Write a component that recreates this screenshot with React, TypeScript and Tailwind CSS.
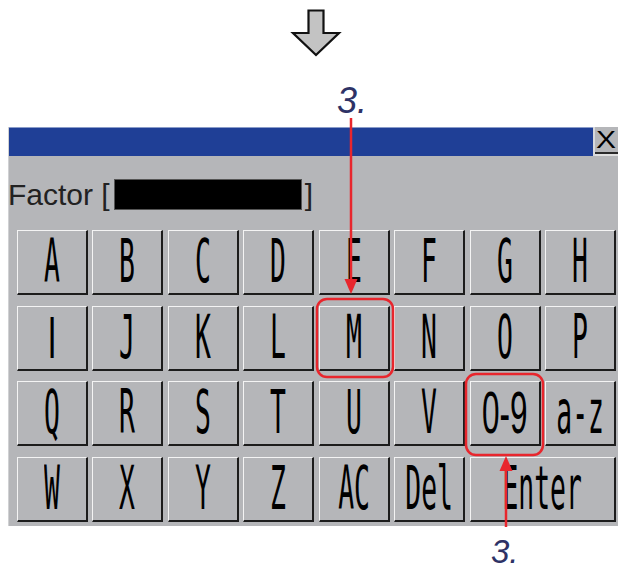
import React from "react";

const rows: string[][] = [
  ["A", "B", "C", "D", "E", "F", "G", "H"],
  ["I", "J", "K", "L", "M", "N", "O", "P"],
  ["Q", "R", "S", "T", "U", "V", "0-9", "a-z"],
  ["W", "X", "Y", "Z", "AC", "Del", "Enter"],
];

function Key({ label }: { label: string }) {
  const wide = label === "Enter";
  const sans = label === "I" || label === "0-9";
  return (
    <div
      className={`${wide ? "col-span-2" : ""} h-[65px] bg-[#b5b6b9] border-t border-l border-t-[#f4f4f4] border-l-[#f4f4f4] border-b-2 border-r-2 border-b-[#1c1c1c] border-r-[#1c1c1c] flex items-center justify-center`}
    >
      {sans ? (
        <span
          className={`inline-block text-[30px] leading-none text-black scale-y-[2] ${label === "I" ? "scale-x-[1.1]" : "scale-x-[1.05]"}`}
          style={{ fontFamily: '"Liberation Sans", Arial, sans-serif' }}
        >
          {label}
        </span>
      ) : (
        <span
          className="inline-block text-[30px] leading-none text-black scale-x-[0.88] scale-y-[2]"
          style={{ fontFamily: '"DejaVu Sans Mono", monospace' }}
        >
          {label}
        </span>
      )}
    </div>
  );
}

export default function App() {
  return (
    <div
      className="relative w-[618px] h-[570px] bg-white overflow-hidden"
      style={{ fontFamily: '"Liberation Sans", Arial, sans-serif' }}
    >
      {/* top arrow */}
      <div className="h-[127px]">
        <svg width="618" height="70" className="block">
          <polygon
            points="308.5,10.5 323.5,10.5 323.5,33 339,33 316,55 293,33 308.5,33"
            fill="#c3c3c3"
            stroke="#111"
            strokeWidth="2.2"
            strokeLinejoin="miter"
          />
        </svg>
      </div>

      {/* panel */}
      <div className="ml-[8px] w-[610px] bg-[#b5b6b9] pb-[4px] border-l border-l-[#d0d1d3]">
        {/* title bar */}
        <div className="flex h-[29px]">
          <div className="flex-1 bg-[#1f3f96] border-t border-t-[#8a9cc9]" />
          <div className="w-[2px] bg-[#d8d9db]" />
          <div className="w-[23px] bg-[#b5b6b9] flex flex-col">
            <div className="flex-1 flex items-center justify-center">
              <span className="inline-block text-[24px] leading-none text-black scale-x-[1.25]">X</span>
            </div>
            <div className="h-[2px] bg-[#2a2a2a]" />
            <div className="h-[2px] bg-[#e0e0e0]" />
          </div>
        </div>

        {/* factor row */}
        <div className="mt-[23px] h-[31px] flex items-center text-[#222] text-[30px] leading-none">
          <span className="-ml-[1px]">Factor [</span>
          <div className="ml-[4px] w-[188px] h-[31px] bg-black border border-[#555]" />
          <span className="ml-[3px]">]</span>
        </div>

        {/* keys */}
        <div className="mt-[20px] ml-[8px] w-[599px] grid grid-cols-8 gap-x-[4.5px] gap-y-[10.5px]">
          {rows.flat().map((k) => (
            <Key key={k} label={k} />
          ))}
        </div>
      </div>

      {/* annotations */}
      <svg
        width="618"
        height="570"
        className="absolute left-0 top-0 pointer-events-none"
      >
        <line x1="351" y1="118" x2="351" y2="282" stroke="#e8262d" strokeWidth="2.5" />
        <polygon points="344.5,279 357.5,279 351,294" fill="#e8262d" />
        <rect x="317" y="299" width="76" height="78" rx="10" ry="10" fill="none" stroke="#e8262d" strokeWidth="2.5" />
        <rect x="466" y="374" width="77" height="81" rx="10" ry="10" fill="none" stroke="#e8262d" strokeWidth="2.5" />
        <line x1="506" y1="527" x2="506" y2="468" stroke="#e8262d" strokeWidth="2.5" />
        <polygon points="499.5,471 512.5,471 506,456" fill="#e8262d" />
      </svg>
      <div className="absolute left-[337px] top-[83px] text-[36px] leading-none italic text-[#2e3266]">3.</div>
      <div className="absolute left-[491px] top-[535px] text-[33px] leading-none italic text-[#2e3266]">3.</div>
    </div>
  );
}
